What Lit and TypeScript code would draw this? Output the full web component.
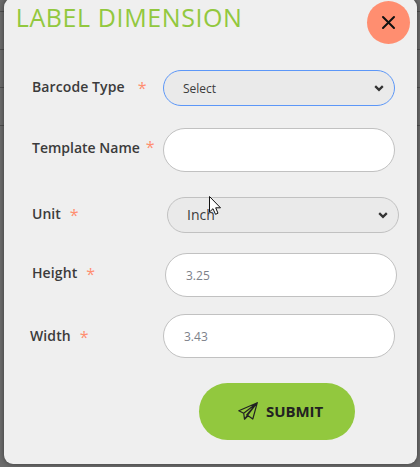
import { LitElement, html, css, svg } from "lit";
import { customElement } from "lit/decorators.js";

const chevron = svg`<path d="M1.2 2.2 L5 5.8 L8.8 2.2" fill="none" stroke="#333" stroke-width="2.3"/>`;

@customElement("app-root")
export class AppRoot extends LitElement {
  static styles = css`
    :host {
      display: flow-root;
      width: 420px;
      height: 467px;
      overflow: hidden;
      position: relative;
      font-family: "Open Sans", "Noto Sans", sans-serif;
      color: #3b3b3b;
      background:
        linear-gradient(#4e4e4e, #4e4e4e) 0 11px / 100% 1px no-repeat,
        linear-gradient(#4e4e4e, #4e4e4e) 0 49px / 100% 1px no-repeat,
        linear-gradient(#4e4e4e, #4e4e4e) 0 87px / 100% 1px no-repeat,
        linear-gradient(#4e4e4e, #4e4e4e) 0 125px / 100% 1px no-repeat,
        #6b6b6b;
    }
    * { box-sizing: border-box; }
    .dialog {
      height: 466px;
      margin: -2px 3px 0 4px;
      background: #efefef;
      border-radius: 9px;
      box-shadow: 0 0 5px rgba(0, 0, 0, 0.45);
      display: flex;
      flex-direction: column;
    }
    header {
      display: flex;
      justify-content: space-between;
      height: 72px;
      padding: 3px 6.6px 0 11.8px;
    }
    h1 {
      margin: -1px 0 0;
      font-size: 25px;
      line-height: 34px;
      font-weight: 400;
      letter-spacing: 0.6px;
      color: #92c83e;
      white-space: nowrap;
    }
    .close {
      width: 43px;
      height: 43px;
      padding: 0 1px 0 0;
      border: 0;
      border-radius: 50%;
      background: #ff8e70;
      display: grid;
      place-items: center;
    }
    .row {
      display: flex;
      align-items: center;
      justify-content: space-between;
      padding: 0 22px 0 28px;
    }
    .name { margin-bottom: 22px; height: 36px; }
    .template { margin-bottom: 25px; height: 44px; }
    .unit { margin-bottom: 20px; height: 36px; padding-right: 18px; }
    .height { margin-bottom: 17px; height: 44px; padding-right: 20px; }
    .width { margin-bottom: 24.5px; height: 44px; padding-left: 26px; }
    .label {
      display: flex;
      font-size: 14px;
      line-height: 22px;
      font-weight: 600;
      white-space: nowrap;
    }
    .star { font-weight: 400; font-size: 16px; color: #ff8e70; margin-left: 9px; line-height: 24px; }
    .name .label { letter-spacing: 0.1px; }
    .name .star { margin-left: 13px; }
    .template .star { margin-left: 6px; margin-top: -2px; }
    .template .label { margin-top: -4px; }
    .height .label { margin-top: -3px; letter-spacing: 0.1px; }
    .width .label { margin-top: 1px; letter-spacing: 0.1px; }
    .control {
      width: 232px;
      height: 44px;
      border: 1px solid #c1c1c1;
      border-radius: 22px;
      background: #fff;
      padding: 1px 10px 0 20px;
      display: flex;
      align-items: center;
      justify-content: space-between;
      font-size: 12px;
      color: #7c818a;
    }
    .select { height: 36px; background: #eaeaea; padding: 0 10px 0 19px; color: #3b3b3b; }
    .focus { border-color: #5c97f8; }
    .large { font-size: 14px; }
    .large span { margin-top: -2px; }
    .submit {
      align-self: flex-start;
      margin-left: 194.7px;
      width: 156.6px;
      height: 57px;
      border: 0;
      border-radius: 29px;
      background: #92c83e;
      display: flex;
      align-items: center;
      padding: 0 0 0 39.3px;
      gap: 8px;
      font: 700 15px "Open Sans", sans-serif;
      color: #222;
    }
    .submit span { letter-spacing: -0.05px; }
    .cursor { position: absolute; left: 208px; top: 195px; }
    svg { display: block; flex: none; }
  `;

  private select(value: string, cls: string) {
    return html`<div class="control select ${cls}">
      <span>${value}</span>
      <svg width="10" height="8" viewBox="0 0 10 8">${chevron}</svg>
    </div>`;
  }

  private row(cls: string, label: string, control: unknown) {
    return html`<div class="row ${cls}">
      <div class="label"><span>${label}</span><span class="star">*</span></div>
      ${control}
    </div>`;
  }

  render() {
    return html`
      <div class="dialog">
        <header>
          <h1>LABEL DIMENSION</h1>
          <button class="close" aria-label="Close">
            <svg width="15" height="15" viewBox="0 0 15 15">
              <path d="M2 2 L13 13 M13 2 L2 13" stroke="#111" stroke-width="2" stroke-linecap="round"/>
            </svg>
          </button>
        </header>
        ${this.row("name", "Barcode Type", this.select("Select", "focus"))}
        ${this.row("template", "Template Name", html`<div class="control"></div>`)}
        ${this.row("unit", "Unit", this.select("Inch", "large"))}
        ${this.row("height", "Height", html`<div class="control">3.25</div>`)}
        ${this.row("width", "Width", html`<div class="control">3.43</div>`)}
        <button class="submit">
          <svg width="20" height="18" viewBox="0 0 20 18" fill="none" stroke="#222" stroke-width="1.2" stroke-linejoin="round">
            <path d="M19.3 .7 L.8 8.8 L5.7 11.2 L19.3 .7 L6.5 17.2 L5.7 11.2 M19.3 .7 L8.7 12.8 L14.8 17 Z M6.5 17.2 L10 13.8"/>
          </svg>
          <span>SUBMIT</span>
        </button>
      </div>
      <svg class="cursor" width="14" height="21" viewBox="0 0 14 21">
        <path d="M1.5 1.5 V17 L5 13.7 L7.5 19.3 L10 18.2 L7.7 12.8 H12.5 Z" fill="#fff" stroke="#111"/>
      </svg>
    `;
  }
}
